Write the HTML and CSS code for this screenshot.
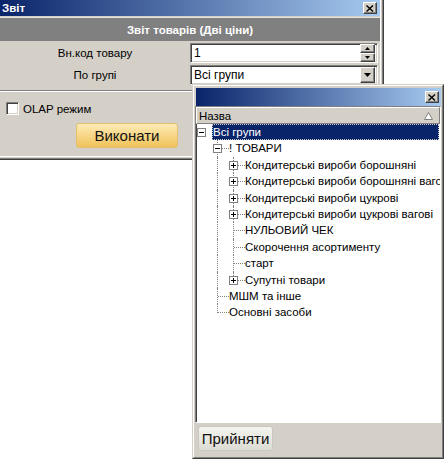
FILE: index.html
```html
<!DOCTYPE html>
<html lang="uk">
<head>
    <meta charset="UTF-8">
    <title>Звіт</title>
    <link rel="stylesheet" href="styles.css">
</head>
<body>
    <div class="win">
        <div class="titlebar">
            <span class="title">Звіт</span>
            <span class="close"><svg width="8" height="7" viewBox="0 0 8 7"><path d="M0.5 0.5 L7 6.5 M7 0.5 L0.5 6.5" stroke="#000" stroke-width="1.4"/></svg></span>
        </div>
        <div class="content">
            <div class="band">Звіт товарів (Дві ціни)</div>

            <div class="field">
                <label>Вн.код товару</label>
                <div class="edit">
                    <span class="val">1</span>
                    <div class="spin">
                        <span class="sbtn"><svg width="5" height="3"><path d="M0 3 L5 3 L2.5 0 Z" fill="#000"/></svg></span>
                        <span class="sbtn"><svg width="5" height="3"><path d="M0 0 L5 0 L2.5 3 Z" fill="#000"/></svg></span>
                    </div>
                </div>
            </div>

            <div class="field">
                <label>По групі</label>
                <div class="edit">
                    <span class="val">Всі групи</span>
                    <span class="drop"><svg width="7" height="4"><path d="M0 0 L7 0 L3.5 4 Z" fill="#000"/></svg></span>
                </div>
            </div>

            <div class="sep"></div>

            <div class="check"><span class="cbox"></span>OLAP режим</div>

            <div class="actions"><button class="btn-run">Виконати</button></div>
        </div>
    </div>

    <!-- dropdown window with the group tree -->
    <div class="popup">
        <div class="popup-in">
            <div class="titlebar tb-pop">
                <span class="title"></span>
                <span class="close"><svg width="8" height="7" viewBox="0 0 8 7"><path d="M0.5 0.5 L7 6.5 M7 0.5 L0.5 6.5" stroke="#000" stroke-width="1.4"/></svg></span>
            </div>

            <div class="list">
                <div class="colhead">
                    <span>Назва</span>
                    <svg width="9" height="8"><path d="M4.5 0.5 L8.5 7.5 L0.5 7.5 Z" fill="#fff" stroke="#808080"/></svg>
                </div>
                <div class="tree">
                    <div class="row"><span class="c root"><i class="exp minus"></i></span><span class="txt sel">Всі групи</span></div>
                    <div class="row"><span class="c"></span><span class="c t"><i class="exp minus"></i></span><span class="txt">! ТОВАРИ</span></div>
                    <div class="row"><span class="c"></span><span class="c v"></span><span class="c t"><i class="exp"></i></span><span class="txt">Кондитерські вироби борошняні</span></div>
                    <div class="row"><span class="c"></span><span class="c v"></span><span class="c t"><i class="exp"></i></span><span class="txt">Кондитерські вироби борошняні вагові</span></div>
                    <div class="row"><span class="c"></span><span class="c v"></span><span class="c t"><i class="exp"></i></span><span class="txt">Кондитерські вироби цукрові</span></div>
                    <div class="row"><span class="c"></span><span class="c v"></span><span class="c t"><i class="exp"></i></span><span class="txt">Кондитерські вироби цукрові вагові</span></div>
                    <div class="row"><span class="c"></span><span class="c v"></span><span class="c t"></span><span class="txt">НУЛЬОВИЙ ЧЕК</span></div>
                    <div class="row"><span class="c"></span><span class="c v"></span><span class="c t"></span><span class="txt">Скорочення асортименту</span></div>
                    <div class="row"><span class="c"></span><span class="c v"></span><span class="c t"></span><span class="txt">старт</span></div>
                    <div class="row"><span class="c"></span><span class="c v"></span><span class="c l"><i class="exp"></i></span><span class="txt">Супутні товари</span></div>
                    <div class="row"><span class="c"></span><span class="c t"></span><span class="txt">МШМ та інше</span></div>
                    <div class="row"><span class="c"></span><span class="c l"></span><span class="txt">Основні засоби</span></div>
                </div>
            </div>

            <div class="pop-foot"><button class="btn-ok">Прийняти</button></div>
        </div>
    </div>
</body>
</html>
```

FILE: styles.css
```css
body { margin: 0; background: #fff; font-family: "Liberation Sans", Arial, sans-serif; font-size: 11.5px; color: #000; }

/* main window */
.win { width: 384px; height: 160px; box-sizing: border-box; background: #d4d0c8; border-right: 1px solid #404040; border-bottom: 1px solid #404040; box-shadow: inset -1px -1px #808080, inset -2px -2px #d4d0c8, inset -3px -3px #fff; display: flex; flex-direction: column; }
.titlebar { height: 16px; display: flex; align-items: center; justify-content: space-between; background: linear-gradient(to right, #0a246a, #a6caf0); margin-right: 3px; padding: 0 3px 0 2px; }
.title { color: #fff; font-weight: bold; font-size: 11.5px; }
.close { width: 14px; height: 12px; box-sizing: border-box; background: #d4d0c8; display: flex; align-items: center; justify-content: center; border: 1px solid; border-color: #fff #404040 #404040 #fff; box-shadow: inset -1px -1px #808080; }

.content { flex: 1; margin-right: 3px; }
.band { height: 23px; margin-top: 1px; background: #808080; color: #fff; font-weight: bold; font-size: 11.5px; display: flex; align-items: center; justify-content: center; border-top: 1px solid #e8e6e0; }

.field { display: flex; align-items: center; margin-top: 2px; }
.field label { width: 190px; text-align: center; }
.edit { width: 188px; height: 20px; box-sizing: border-box; background: #fff; display: flex; align-items: center; border: 1px solid; border-color: #808080 #fff #fff #808080; box-shadow: inset 1px 1px #404040, inset -1px -1px #d4d0c8; padding: 0 2px 0 3px; font-size: 12px; }
.val { flex: 1; }
.spin { display: flex; flex-direction: column; width: 15px; height: 18px; }
.sbtn, .drop { flex: 1; box-sizing: border-box; background: #d4d0c8; display: flex; align-items: center; justify-content: center; border: 1px solid; border-color: #fff #404040 #404040 #fff; box-shadow: inset -1px -1px #808080; }
.drop { flex: none; width: 15px; height: 16px; }

.sep { margin: 5px 0 0; border-top: 1px solid #808080; border-bottom: 1px solid #fff; }

.check { display: flex; align-items: center; gap: 4px; margin: 10px 0 0 6px; }
.cbox { width: 13px; height: 13px; box-sizing: border-box; background: #fff; border: 1px solid; border-color: #808080 #fff #fff #808080; box-shadow: inset 1px 1px #404040, inset -1px -1px #d4d0c8; }

.actions { padding: 8px 0 0 76px; }
.btn-run { width: 102px; height: 25px; font-family: inherit; font-size: 15px; font-weight: normal; color: #111; border: 1px solid #e2c070; border-radius: 3px; background: linear-gradient(#fcebb5, #f6d37e 60%, #efc25c); padding: 0; }

/* popup tree window */
.popup { position: absolute; left: 192px; top: 84px; width: 252px; height: 375px; box-sizing: border-box; border: 1px solid; border-color: #d4d0c8 #404040 #404040 #d4d0c8; }
.popup-in { height: 100%; box-sizing: border-box; background: #d4d0c8; border: 1px solid; border-color: #fff #808080 #808080 #fff; padding: 2px 1px 1px; display: flex; flex-direction: column; }
.tb-pop { height: 18px; margin: 0 0 0 1px; padding: 0 2px; }

.list { flex: 1; display: flex; flex-direction: column; background: #fff; border: 1px solid; border-color: #808080 #fff #fff #808080; box-shadow: inset 1px 1px #404040; overflow: hidden; }
.colhead { height: 17px; box-sizing: border-box; background: #d4d0c8; display: flex; align-items: center; justify-content: space-between; padding: 0 6px 0 2px; border: 1px solid; border-color: #fff #808080 #808080 #fff; }
.tree { flex: 1; font-size: 11.5px; }
.row { height: 16.4px; display: flex; align-items: stretch; }
.c { width: 16px; flex: none; position: relative; }
.c.v::before, .c.t::before, .c.l::before { content: ""; position: absolute; left: 5px; top: 0; bottom: 0; border-left: 1px dotted #808080; }
.c.l::before { bottom: 50%; }
.c.t::after, .c.l::after { content: ""; position: absolute; left: 6px; right: -1px; top: 8px; border-top: 1px dotted #808080; }
.exp { position: absolute; left: 1px; top: 4px; width: 9px; height: 9px; box-sizing: border-box; background: #fff; border: 1px solid #808080; z-index: 1; }
.exp::before { content: ""; position: absolute; left: 1px; top: 3px; width: 5px; height: 1px; background: #000; }
.exp:not(.minus)::after { content: ""; position: absolute; left: 3px; top: 1px; width: 1px; height: 5px; background: #000; }
.txt { margin-left: 0; padding: 0 1px; line-height: 16px; white-space: nowrap; }
.txt.sel { flex: 1; background: #0a246a; color: #fff; outline: 1px dotted #c8c8c8; outline-offset: -1px; margin-right: 1px; }

.pop-foot { padding: 3px 0 5px 3px; }
.btn-ok { width: 75px; height: 25px; font-family: inherit; font-size: 15px; font-weight: normal; color: #111; border: 1px solid #c8c8c0; border-radius: 3px; background: linear-gradient(#f4f4f0, #dcdcd4); padding: 0; }
```
